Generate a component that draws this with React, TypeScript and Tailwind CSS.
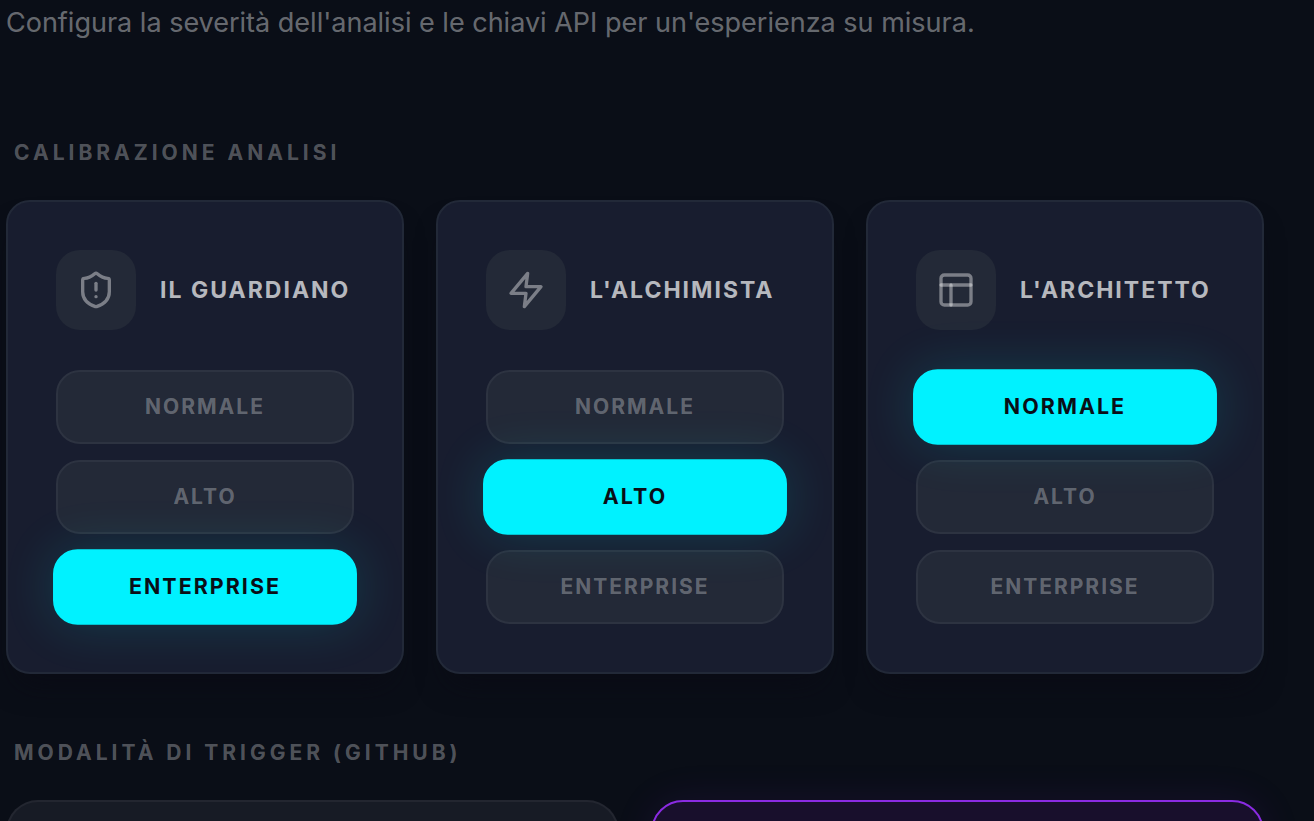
import { useState, type ReactNode } from 'react';
import { ShieldAlert } from 'lucide-react';
import clsx from 'clsx';

const LEVELS = ['NORMALE', 'ALTO', 'ENTERPRISE'];

const iconProps = {
  width: 40,
  height: 40,
  viewBox: '0 0 24 24',
  fill: 'none',
  stroke: 'currentColor',
  strokeWidth: 2,
  strokeLinecap: 'round',
  strokeLinejoin: 'round',
} as const;

const BoltIcon = () => (
  <svg {...iconProps}>
    <polygon points="13 2 3 14 12 14 11 22 21 10 12 10 13 2" />
  </svg>
);

const LayoutIcon = () => (
  <svg {...iconProps}>
    <rect x="3" y="3" width="18" height="18" rx="2" ry="2" />
    <line x1="3" y1="9" x2="21" y2="9" />
    <line x1="9" y1="21" x2="9" y2="9" />
  </svg>
);

const AGENTS: { name: string; icon: ReactNode; level: string }[] = [
  { name: 'IL GUARDIANO', icon: <ShieldAlert size={40} />, level: 'ENTERPRISE' },
  { name: "L'ALCHIMISTA", icon: <BoltIcon />, level: 'ALTO' },
  { name: "L'ARCHITETTO", icon: <LayoutIcon />, level: 'NORMALE' },
];

function SectionTitle({ children }: { children: string }) {
  return (
    <h2 className="pl-2 text-[21px] leading-[30px] font-bold tracking-[4px] text-white/30">
      {children}
    </h2>
  );
}

function AgentCard({ name, icon, level, onChange }: {
  name: string; icon: ReactNode; level: string; onChange: (level: string) => void;
}) {
  return (
    <div className="rounded-3xl border-2 border-[#222938] bg-[#181d2f] p-12 shadow-[0_20px_30px_-12px_rgba(10,10,20,0.7)]">
      <div className="mb-10 flex items-center gap-6">
        <div className="flex size-20 shrink-0 items-center justify-center rounded-3xl bg-[#232937] text-white/40">
          {icon}
        </div>
        <h3 className="text-[23px] leading-8 font-bold tracking-[2px] whitespace-nowrap text-white/70">{name}</h3>
      </div>
      <div className="flex flex-col gap-4">
        {LEVELS.map(l => (
          <button
            key={l}
            type="button"
            aria-pressed={l === level}
            onClick={() => onChange(l)}
            className={clsx(
              'rounded-3xl border-2 py-5 text-[21px] leading-[30px] font-bold tracking-[2px] transition',
              l === level
                ? 'scale-[1.02] border-[#00f2ff] bg-[#00f2ff] text-[#0a0e17] shadow-[0_0_50px_rgba(0,242,255,0.15)]'
                : 'border-[#2d3341] bg-[#232937] text-white/30'
            )}
          >
            {l}
          </button>
        ))}
      </div>
    </div>
  );
}

export default function App() {
  const [levels, setLevels] = useState(AGENTS.map(a => a.level));

  const setLevel = (index: number, level: string) => {
    setLevels(prev => prev.map((l, i) => (i === index ? level : l)));
  };

  return (
    <main className="h-screen overflow-hidden bg-[#0a0e17] pr-[50px] pl-1.5 font-['Inter',sans-serif]">
      <p className="pt-0.5 text-[27px] leading-[42px] text-white/40">
        Configura la severità dell'analisi e le chiavi API per un'esperienza su misura.
      </p>

      {/* CALIBRAZIONE */}
      <section className="mt-[94px]">
        <SectionTitle>CALIBRAZIONE ANALISI</SectionTitle>
        <div className="mt-8 grid grid-cols-3 gap-8">
          {AGENTS.map((a, i) => (
            <AgentCard key={a.name} name={a.name} icon={a.icon} level={levels[i]} onChange={l => setLevel(i, l)} />
          ))}
        </div>
      </section>

      {/* TRIGGER */}
      <section className="mt-16">
        <SectionTitle>MODALITÀ DI TRIGGER (GITHUB)</SectionTitle>
        <div className="mt-8 grid grid-cols-2 gap-8">
          <div className="min-h-40 rounded-[32px] border-2 border-white/5 bg-[#171b25]" />
          <div className="min-h-40 rounded-[32px] border-2 border-[#8a2be2] bg-[#180f2c] shadow-[0_0_40px_rgba(138,43,226,0.1)]" />
        </div>
      </section>
    </main>
  );
}
